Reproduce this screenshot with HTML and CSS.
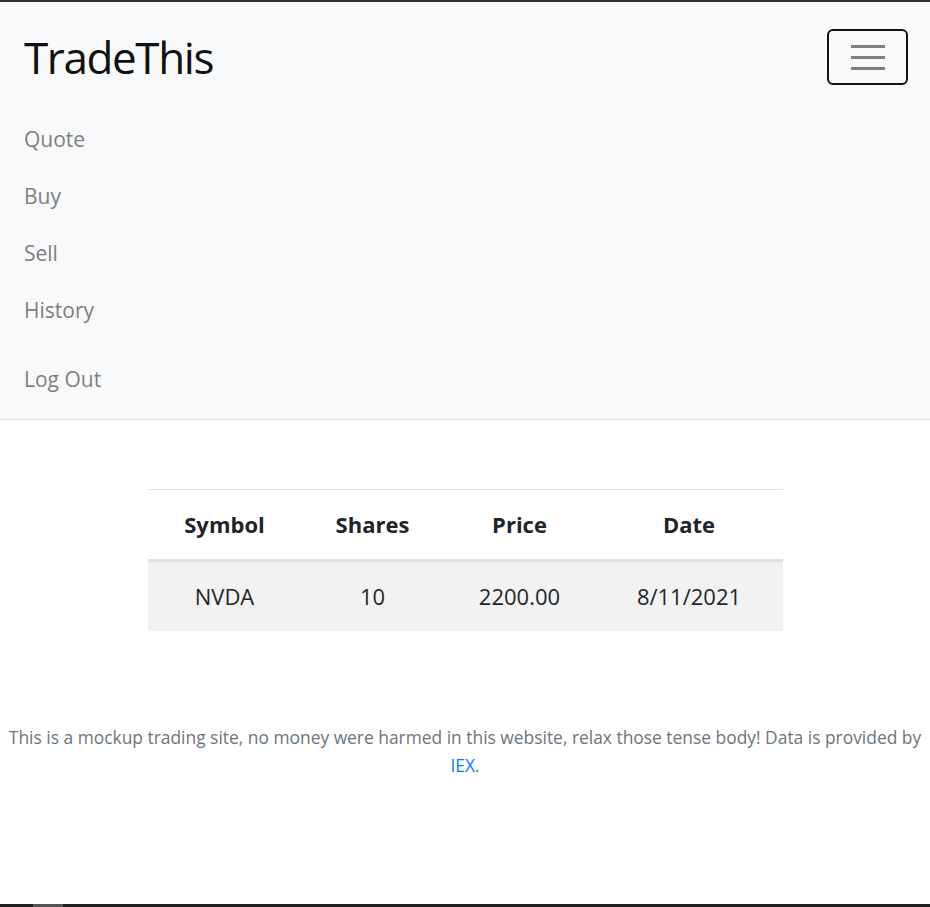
FILE: index.html
```html
<!DOCTYPE html>
<html lang="en">
<head>
<meta charset="utf-8">
<title>TradeThis</title>
<link rel="stylesheet" href="styles.css">
</head>
<body>
<div class="frame-top"></div>
<nav class="navbar">
  <div class="navbar-head">
    <a class="brand" href="#">TradeThis</a>
    <button class="toggler" type="button" aria-label="Toggle navigation">
      <svg width="34" height="26" viewBox="0 0 34 26" aria-hidden="true">
        <path d="M0 2.5H34M0 13.5H34M0 24.5H34" stroke="#808080" stroke-width="3" stroke-linecap="round"/>
      </svg>
    </button>
  </div>
  <ul class="nav-list">
    <li><a class="nav-link" href="#">Quote</a></li>
    <li><a class="nav-link" href="#">Buy</a></li>
    <li><a class="nav-link" href="#">Sell</a></li>
    <li><a class="nav-link" href="#">History</a></li>
  </ul>
  <ul class="nav-list nav-right">
    <li><a class="nav-link" href="#">Log Out</a></li>
  </ul>
</nav>
<main class="main">
  <table class="table">
    <thead>
      <tr>
        <th class="c1">Symbol</th>
        <th class="c2">Shares</th>
        <th class="c3">Price</th>
        <th class="c4">Date</th>
      </tr>
    </thead>
    <tbody>
      <tr>
        <td>NVDA</td>
        <td>10</td>
        <td>2200.00</td>
        <td>8/11/2021</td>
      </tr>
    </tbody>
  </table>
</main>
<footer class="footer">
  This is a mockup trading site, no money were harmed in this website, relax those tense body! Data is provided by <a href="#">IEX</a>.
</footer>
<div class="frame-bottom"><span class="frame-thumb"></span></div>
</body>
</html>
```
FILE: styles.css
```css
html, body {
  margin: 0;
  padding: 0;
}
body {
  font-family: "Open Sans", "Noto Sans", sans-serif;
  color: #212529;
  background: #fff;
  min-height: 907px;
}
.frame-top {
  height: 2px;
  background: #2f2f2f;
}
.navbar {
  background: #f8f9fa;
  border-bottom: 1px solid #dee2e6;
  padding: 27px 22px 12px 24px;
}
.navbar-head {
  display: flex;
  align-items: center;
  justify-content: space-between;
  height: 56px;
}
.brand {
  font-size: 44px;
  line-height: 56px;
  color: #111;
  text-decoration: none;
  letter-spacing: -1.4px;
}
.toggler {
  width: 81px;
  height: 56px;
  box-sizing: border-box;
  border: 2px solid #111;
  border-radius: 6px;
  background: transparent;
  display: flex;
  align-items: center;
  justify-content: center;
  padding: 0;
}
.toggler svg {
  display: block;
}
.nav-list {
  list-style: none;
  margin: 25px 0 0 0;
  padding: 0;
}
.nav-right {
  margin-top: 12px;
}
.nav-link {
  display: block;
  font-size: 21px;
  line-height: 30px;
  padding: 13.5px 0;
  color: #7f7f7f;
  text-decoration: none;
}
.main {
  display: flex;
  justify-content: center;
  padding-top: 69px;
}
.table {
  border-collapse: collapse;
  width: 635px;
  border-top: 1px solid #dee2e6;
  font-size: 22px;
}
.table th, .table td {
  text-align: center;
  padding: 0;
}
.table th {
  height: 68px;
  padding-bottom: 1px;
  font-weight: 700;
  color: #212529;
  border-bottom: 3px solid #dee2e6;
}
.table td {
  height: 67px;
  padding-bottom: 2px;
  background: #f2f2f2;
}
.c1 { width: 154px; }
.c2 { width: 142px; }
.c3 { width: 152px; }
.c4 { width: 187px; }
.footer {
  margin-top: 92px;
  padding: 0 4px;
  text-align: center;
  font-size: 17.4px;
  line-height: 28px;
  color: #6c757d;
}
.footer a {
  color: #007bff;
  text-decoration: none;
}
.frame-bottom {
  position: fixed;
  left: 0;
  right: 0;
  bottom: 0;
  height: 3px;
  background: #222;
}
.frame-thumb {
  position: absolute;
  left: 33px;
  top: 0;
  width: 30px;
  height: 3px;
  background: #555;
}
```
